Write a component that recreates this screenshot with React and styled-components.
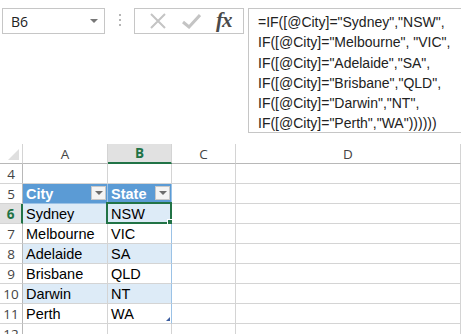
import React from "react";
import styled, { createGlobalStyle, css } from "styled-components";

const Global = createGlobalStyle`
  html, body {
    margin: 0;
    padding: 0;
    background: #ffffff;
    overflow: hidden;
  }
  body {
    font-family: "Liberation Sans", Arial, sans-serif;
    color: #000;
  }
`;

const green = "#217346";
const grid = "#d4d4d4";

// formula bar
const Page = styled.div`
  width: 461px;
  height: 334px;
  overflow: hidden;
`;
const Bar = styled.div`
  display: flex;
  align-items: flex-start;
  padding: 8px 0 0 2px;
  height: 136px;
  box-sizing: border-box;
`;
const NameBox = styled.div`
  display: flex;
  align-items: center;
  justify-content: space-between;
  width: 103px;
  height: 26px;
  box-sizing: border-box;
  border: 1px solid #c6c6c6;
  padding: 0 6px 0 8px;
  font-family: "Open Sans", "Liberation Sans", sans-serif;
  font-size: 14px;
  color: #222;
`;
const Arrow = styled.span`
  width: 0;
  height: 0;
  border-left: 4px solid transparent;
  border-right: 4px solid transparent;
  border-top: 4px solid #777;
`;
const Dots = styled.div`
  display: flex;
  flex-direction: column;
  gap: 3px;
  width: 29px;
  align-items: center;
  padding-top: 6px;
  span {
    width: 2px;
    height: 2px;
    background: #b5b5b5;
  }
`;
const Buttons = styled.div`
  display: flex;
  align-items: center;
  justify-content: space-around;
  width: 110px;
  height: 26px;
  box-sizing: border-box;
  border: 1px solid #c6c6c6;
  padding: 0 4px 0 6px;
`;
const Fx = styled.span`
  font-family: "Liberation Serif", "DejaVu Serif", serif;
  font-style: italic;
  font-weight: bold;
  font-size: 21px;
  color: #4a4a4a;
  letter-spacing: -1px;
  margin-top: -2px;
`;
const Formula = styled.div`
  flex: 1;
  margin: 0 -4px 0 4px;
  height: 125px;
  box-sizing: border-box;
  border: 1px solid #c6c6c6;
  padding: 3px 0 0 9px;
  font-size: 14px;
  line-height: 20.3px;
  color: #222;
  white-space: pre;
`;

// sheet
const Sheet = styled.div`
  display: grid;
  grid-template-columns: 23px 85px 64px 64px 1fr;
  grid-auto-rows: 20px;
  margin-top: 8px;
`;
const Cell = styled.div`
  display: flex;
  align-items: flex-end;
  box-sizing: border-box;
  border-right: 1px solid ${grid};
  border-bottom: 1px solid ${grid};
  padding: 0 0 1px 3px;
  font-size: 14.5px;
  position: relative;
  background: ${(p) => p.$fill || "#fff"};
  ${(p) =>
    p.$tableEdge &&
    css`
      border-right-color: #9bc2e6;
    `}
`;
const HeadCell = styled.div`
  display: flex;
  align-items: center;
  justify-content: center;
  box-sizing: border-box;
  border-right: 1px solid ${grid};
  border-bottom: 1px solid #b8b8b8;
  font-family: "Open Sans", "Liberation Sans", sans-serif;
  font-size: 13.5px;
  color: #444;
  position: relative;
  ${(p) =>
    p.$active &&
    css`
      background: #e1e1e1;
      color: ${green};
      font-weight: bold;
      border-bottom: 2px solid ${green};
    `}
`;
const Corner = styled(HeadCell)`
  &::after {
    content: "";
    position: absolute;
    right: 3px;
    bottom: 3px;
    border-left: 11px solid transparent;
    border-bottom: 11px solid #dfdfdf;
  }
`;
const RowNum = styled.div`
  display: flex;
  align-items: center;
  justify-content: center;
  box-sizing: border-box;
  border-right: 1px solid #b8b8b8;
  border-bottom: 1px solid ${grid};
  font-family: "Open Sans", "Liberation Sans", sans-serif;
  font-size: 13.5px;
  color: #444;
  padding-top: 1px;
  ${(p) =>
    p.$active &&
    css`
      background: #e1e1e1;
      color: ${green};
      font-weight: bold;
      border-right: 2px solid ${green};
    `}
`;
const TableHead = styled(Cell)`
  background: #5b9bd5;
  color: #fff;
  font-weight: bold;
  justify-content: space-between;
  border-right-color: #9bc2e6;
  border-bottom-color: #9bc2e6;
`;
const Filter = styled.span`
  display: flex;
  align-items: center;
  justify-content: center;
  width: 15px;
  height: 14px;
  margin: 0 1px 2px 0;
  background: #f4f4f4;
  border: 1px solid #c8c8c8;
  box-sizing: border-box;
  &::after {
    content: "";
    border-left: 4px solid transparent;
    border-right: 4px solid transparent;
    border-top: 4px solid #6d6d6d;
  }
`;
const Selection = styled.div`
  position: absolute;
  left: -2px;
  top: -2px;
  right: -1px;
  bottom: -1px;
  border: 2px solid ${green};
  pointer-events: none;
  &::after {
    content: "";
    position: absolute;
    right: -4px;
    bottom: -4px;
    width: 5px;
    height: 5px;
    background: ${green};
    border: 1px solid #fff;
  }
`;
const Resize = styled.span`
  position: absolute;
  right: 1px;
  bottom: 2px;
  border-left: 4px solid transparent;
  border-bottom: 4px solid #3b5c9e;
`;

const formula = `=IF([@City]="Sydney","NSW",
IF([@City]="Melbourne", "VIC",
IF([@City]="Adelaide","SA",
IF([@City]="Brisbane","QLD",
IF([@City]="Darwin","NT",
IF([@City]="Perth","WA"))))))`;

const rows = [
  ["Sydney", "NSW"],
  ["Melbourne", "VIC"],
  ["Adelaide", "SA"],
  ["Brisbane", "QLD"],
  ["Darwin", "NT"],
  ["Perth", "WA"],
];

export default function App() {
  return (
    <Page>
      <Global />
      <Bar>
        <NameBox>
          B6
          <Arrow />
        </NameBox>
        <Dots>
          <span />
          <span />
          <span />
        </Dots>
        <Buttons>
          <svg width="18" height="16" viewBox="0 0 18 16">
            <path d="M2 1 L16 15 M16 1 L2 15" stroke="#c4c4c4" strokeWidth="2" fill="none" />
          </svg>
          <svg width="19" height="16" viewBox="0 0 19 16">
            <path d="M1 9 L7 14 L18 2" stroke="#c4c4c4" strokeWidth="3" fill="none" />
          </svg>
          <Fx>fx</Fx>
        </Buttons>
        <Formula>{formula}</Formula>
      </Bar>
      <Sheet>
        <Corner />
        <HeadCell>A</HeadCell>
        <HeadCell $active>B</HeadCell>
        <HeadCell>C</HeadCell>
        <HeadCell>D</HeadCell>

        <RowNum>4</RowNum>
        <Cell />
        <Cell />
        <Cell />
        <Cell />

        <RowNum>5</RowNum>
        <TableHead>
          City
          <Filter />
        </TableHead>
        <TableHead>
          State
          <Filter />
        </TableHead>
        <Cell />
        <Cell />

        {rows.map(([city, state], i) => {
          const n = i + 6;
          const fill = i % 2 === 0 ? "#ddebf7" : "#fff";
          return (
            <React.Fragment key={n}>
              <RowNum $active={n === 6}>{n}</RowNum>
              <Cell $fill={fill}>{city}</Cell>
              <Cell $fill={fill} $tableEdge>
                {state}
                {n === 6 && <Selection />}
                {n === 11 && <Resize />}
              </Cell>
              <Cell />
              <Cell />
            </React.Fragment>
          );
        })}

        <RowNum>12</RowNum>
        <Cell />
        <Cell />
        <Cell />
        <Cell />
      </Sheet>
    </Page>
  );
}
